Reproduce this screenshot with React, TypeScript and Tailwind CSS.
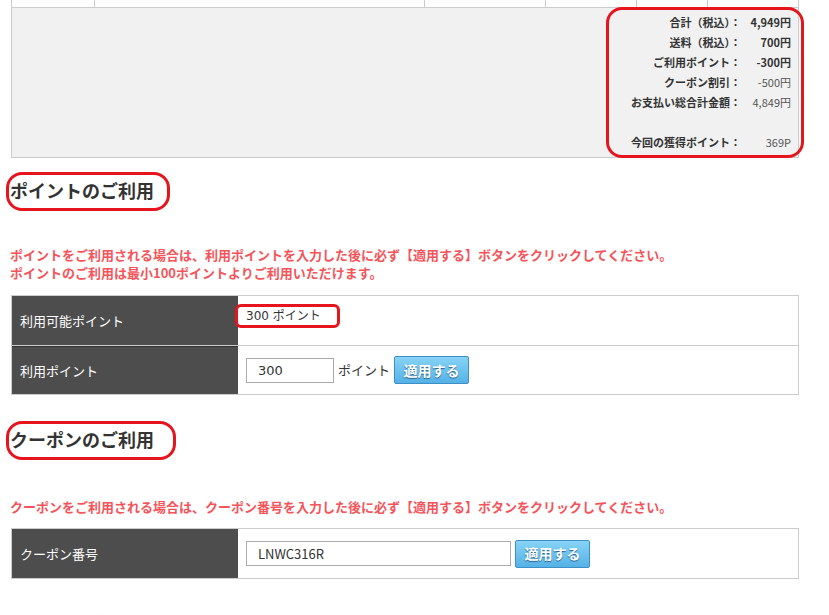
import React from 'react';

const font = { fontFamily: '"Noto Sans CJK JP", sans-serif' };

const summary: { label: string; value: string; bold: boolean }[] = [
  { label: '合計（税込）：', value: '4,949円', bold: true },
  { label: '送料（税込）：', value: '700円', bold: true },
  { label: 'ご利用ポイント：', value: '-300円', bold: true },
  { label: 'クーポン割引：', value: '-500円', bold: false },
  { label: 'お支払い総合計金額：', value: '4,849円', bold: false },
];

const ApplyButton: React.FC = () => (
  <button className="h-[28px] w-[75px] rounded-[2px] border border-[#3d8fc6] bg-gradient-to-b from-[#86d3f6] to-[#55b2e6] text-[14px] font-bold text-white [text-shadow:0_1px_1px_#2a5f86]">
    適用する
  </button>
);

const Heading: React.FC<{ title: string; ringWidth: string }> = ({ title, ringWidth }) => (
  <div className="relative">
    <h2 className="text-[18px] font-bold leading-[27px] text-[#333]">{title}</h2>
    <div className={`pointer-events-none absolute left-[-4px] top-[-5px] h-[39px] rounded-[16px] border-[3px] border-[#e5141d] ${ringWidth}`} />
  </div>
);

const App: React.FC = () => {
  return (
    <div className="h-[615px] w-[829px] overflow-hidden bg-white" style={font}>
      <div className="ml-[11px] w-[788px]">
        {/* tail of the cart table */}
        <div className="grid h-[8px] grid-cols-[83px_330px_121px_91px_71px_1fr] border-x border-b border-[#ccc]">
          <div className="border-r border-[#ccc]" />
          <div className="border-r border-[#ccc]" />
          <div className="border-r border-[#ccc]" />
          <div className="border-r border-[#ccc]" />
          <div className="border-r border-[#ccc]" />
          <div />
        </div>

        {/* totals */}
        <div className="relative h-[150px] border-x border-b border-[#ccc] bg-[#f1f1f1] pr-[7px] pt-[4px] text-[11px] text-[#333]">
          {summary.map((row) => (
            <div key={row.label} className="flex h-[20px] items-center justify-end leading-[20px]">
              <span className="font-bold">{row.label}</span>
              <span className={`w-[50px] text-right ${row.bold ? 'font-bold' : 'text-[#555]'}`}>{row.value}</span>
            </div>
          ))}
          <div className="h-[20px]" />
          <div className="flex h-[20px] items-center justify-end leading-[20px]">
            <span className="font-bold">今回の獲得ポイント：</span>
            <span className="w-[50px] text-right text-[#555]">369P</span>
          </div>
          <div className="pointer-events-none absolute left-[594px] top-[-1px] h-[151px] w-[198px] rounded-[16px] border-[3px] border-[#e5141d]" />
        </div>

        {/* points */}
        <div className="mt-[19px] -ml-[1px]">
          <Heading title="ポイントのご利用" ringWidth="w-[164px]" />
        </div>
        <p className="mt-[42px] -ml-[1px] text-[13px] font-bold leading-[18px] text-[#f5545a]">
          ポイントをご利用される場合は、利用ポイントを入力した後に必ず【適用する】ボタンをクリックしてください。
          <br />
          ポイントのご利用は最小100ポイントよりご利用いただけます。
        </p>

        <div className="mt-[13px] border border-[#ccc] text-[13px]">
          <div className="flex h-[49px]">
            <div className="flex w-[226px] items-center bg-[#4d4d4d] pl-[8px] text-white">利用可能ポイント</div>
            <div className="flex-1 pl-[8px] pt-[9px] text-[#333]">
              <span className="relative" style={{ fontFamily: '"DejaVu Sans", "Noto Sans CJK JP", sans-serif' }}>
                <span className="text-[12px]">300 ポイント</span>
                <span className="pointer-events-none absolute left-[-11px] top-[-4px] h-[24px] w-[105px] rounded-[6px] border-[3px] border-[#e5141d]" />
              </span>
            </div>
          </div>
          <div className="flex h-[49px] border-t border-[#ccc]">
            <div className="flex w-[226px] items-center border-t border-[#333] bg-[#4d4d4d] pl-[8px] text-white">利用ポイント</div>
            <div className="flex flex-1 items-center gap-[4px] pl-[8px] text-[#333]">
              <input
                className="h-[25px] w-[88px] border border-[#aaa] pl-[11px] text-[13px] text-[#333] outline-none"
                style={{ fontFamily: '"DejaVu Sans", sans-serif' }}
                defaultValue="300"
              />
              <span>ポイント</span>
              <ApplyButton />
            </div>
          </div>
        </div>

        {/* coupon */}
        <div className="mt-[31px] -ml-[1px]">
          <Heading title="クーポンのご利用" ringWidth="w-[170px]" />
        </div>
        <p className="mt-[45px] -ml-[1px] text-[13px] font-bold leading-[18px] text-[#f5545a]">
          クーポンをご利用される場合は、クーポン番号を入力した後に必ず【適用する】ボタンをクリックしてください。
        </p>

        <div className="mt-[12px] flex h-[51px] border border-[#ccc] text-[13px]">
          <div className="flex w-[226px] items-center bg-[#4d4d4d] pl-[8px] text-white">クーポン番号</div>
          <div className="flex flex-1 items-center gap-[4px] pl-[8px]">
            <input
              className="h-[25px] w-[265px] border border-[#aaa] pl-[11px] text-[13px] text-[#333] outline-none"
              defaultValue="LNWC316R"
            />
            <ApplyButton />
          </div>
        </div>

        <h2 className="mt-[31px] text-[18px] font-bold leading-[27px] text-[#333]">ギフトのご利用</h2>
      </div>
    </div>
  );
};

export default App;
